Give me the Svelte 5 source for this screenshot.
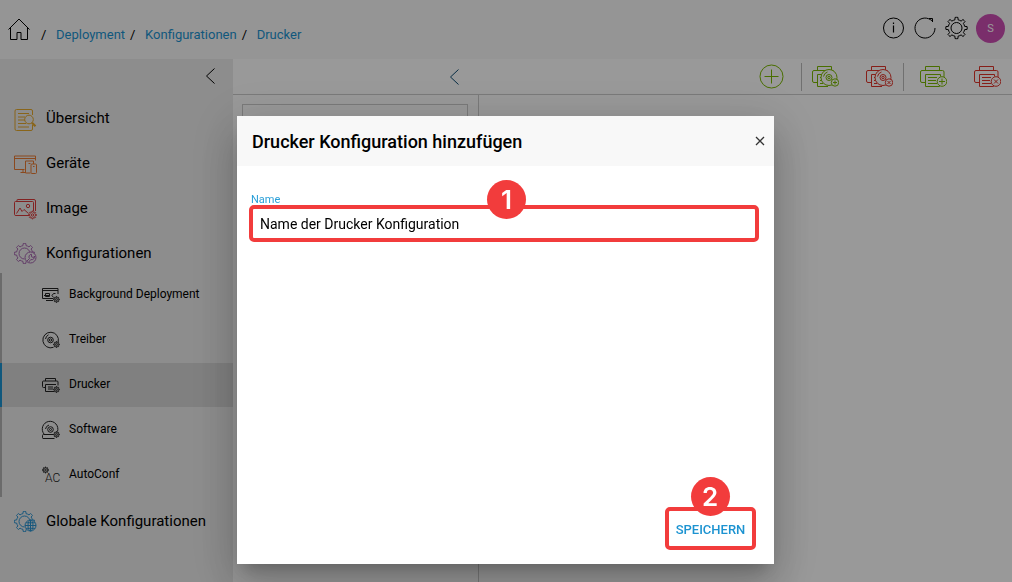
<script lang="ts">
    let name = $state('Name der Drucker Konfiguration');
    let open = $state(true);

    const crumbs = ['Deployment', 'Konfigurationen', 'Drucker'];

    const menu = [
        { label: 'Übersicht', icon: 'overview', color: '#e5a82c' },
        { label: 'Geräte', icon: 'devices', color: '#e87b32' },
        { label: 'Image', icon: 'image', color: '#d93a3a' },
        {
            label: 'Konfigurationen',
            icon: 'config',
            color: '#a565ae',
            children: [
                { label: 'Background Deployment', icon: 'background' },
                { label: 'Treiber', icon: 'disc' },
                { label: 'Drucker', icon: 'printer', active: true },
                { label: 'Software', icon: 'software' },
                { label: 'AutoConf', icon: 'autoconf' }
            ]
        },
        { label: 'Globale Konfigurationen', icon: 'global', color: '#2a93d1' }
    ];

    // outline of a cog wheel with flat teeth
    function gear(cx: number, cy: number, inner: number, outer: number, teeth = 8) {
        const step = (Math.PI * 2) / teeth;
        const at = (r: number, a: number) =>
            `${(cx + r * Math.cos(a)).toFixed(2)} ${(cy + r * Math.sin(a)).toFixed(2)}`;
        let d = '';
        for (let i = 0; i < teeth; i++) {
            const a = i * step - Math.PI / 2;
            d += `${i ? 'L' : 'M'}${at(inner, a - step * 0.25)}`;
            d += `L${at(outer, a - step * 0.17)}`;
            d += `A${outer} ${outer} 0 0 1 ${at(outer, a + step * 0.17)}`;
            d += `L${at(inner, a + step * 0.25)}`;
            d += `A${inner} ${inner} 0 0 1 ${at(inner, a + step * 0.75)}`;
        }
        return d + 'Z';
    }
</script>

{#snippet chevron()}
    <svg class="icon" width="24" height="24" viewBox="0 0 24 24"><path d="M15.500 4.500 7.500 12l8 7.500" /></svg>
{/snippet}

{#snippet toolIcon(disc, add)}
    <svg class="icon" width="28" height="28" viewBox="0 0 28 28">
        <path d="M6.500 7.500V3.500h14v4" />
        {#if disc}
            <path d="M6.500 19.500H3q-1.500 0-1.500-1.500V9Q1.500 7.500 3 7.500h19.500M14 11.500H6.500v12H17M9 14.500h3m-3 3h3m-3 3h3" />
            <circle cx="18" cy="14.500" r="8" class="paper" />
            <circle cx="18" cy="14.500" r="3" />
            <circle cx="18" cy="14.500" r="1.200" />
            <path d="M12.500 13.500q.700-3.500 4-4.500" />
            <circle cx="24" cy="19.500" r="3.700" class="paper" />
            {#if add}
                <path d="M24 17.500v4M22 19.500h4" />
            {:else}
                <path d="m22.500 18 3 3m0-3-3 3" />
            {/if}
        {:else}
            <path d="M6 19.500H3Q1.500 19.500 1.500 18V9Q1.500 7.500 3 7.500h20.500Q25 7.500 25 9v5M20.500 22.500v1h-14v-12h15v2M9 14.500h9M9 17.500h8M9 20.500h9" />
            <circle cx="23" cy="18.500" r="4.800" class="paper" />
            {#if add}
                <path d="M23 15.500v6M20 18.500h6" />
            {:else}
                <path d="m21 16.500 4 4m0-4-4 4" />
            {/if}
        {/if}
    </svg>
{/snippet}

{#snippet navIcon(kind)}
    <svg class="icon" width="24" height="24" viewBox="0 0 24 24">
        {#if kind === 'overview'}
            <path d="M18.500 7V3q0-1.500-1.500-1.500H2.500Q1 1.500 1 3v18q0 1.500 1.500 1.500H17q1.500 0 1.500-1.500v-4M4 5.500h11M4 9h7M4 12h7M4 15.500h8M4 19h11" />
            <circle cx="15" cy="11.500" r="4.300" />
            <path d="m18 14.800 3.500 3.500" stroke-width="2.200" />
        {:else if kind === 'devices'}
            <path d="M10.500 16.500H.500v-13.500H21.500V7.500M.500 5.500h21M6.500 19.500h5M9 16.500v3" />
            <path d="M16.500 20h-5v-12h8V11" />
            <rect x="17" y="11" width="5.500" height="9.500" rx="1" />
            <path d="M19 13.500h1.500M14.500 10.500h2" />
        {:else if kind === 'image'}
            <path d="M15 17.500H2q-1.500 0-1.500-1v-12q0-1 1-1h17q1 0 1 1V13M3 3.500V2q0-.500.500-.500H20q1.500 0 1.500 1.500v10" />
            <path d="m2.500 15.500 3.500-5.500 2 3.500 2-2 4.500 4" />
            <circle cx="14" cy="8" r="1.700" />
            <path d={gear(18.500, 17, 2.800, 3.900)} />
            <circle cx="18.500" cy="17" r="1.200" />
        {:else if kind === 'config' || kind === 'global'}
            <path d={gear(10.500, 10.500, 8, 10)} />
            <path d="M10.500 16a5.500 5.500 0 1 1 5.500-5.500" />
            <circle cx="16.500" cy="14.500" r="5.500" class="mask" />
            {#if kind === 'config'}
                <path d="M13 18l2.500-2.500a2.600 2.600 0 0 1 2-4.200v2.500l2 .700 1-1.500a3 3 0 0 1-3.700 3.600l-2.200 2.500" />
            {:else}
                <ellipse cx="16.500" cy="14.500" rx="2.500" ry="5.500" />
                <path d="M16.500 9v11M11 14.500h11M12 11.800h9M12 17.300h9" />
            {/if}
        {/if}
    </svg>
{/snippet}

{#snippet subIcon(kind)}
    <svg class="icon" width="20" height="20" viewBox="0 0 20 20">
        {#if kind === 'background'}
            <path d="M12.500 13.500H1.500v-10h15.500V9M1.500 5.500h15.500M5 15.500h7" />
            <path d="M3 10.500h6M4.500 8.500h4v3h-4zM14.500 8.500h-2l-1.500 2 1.500 2" />
        {:else if kind === 'disc'}
            <path d="M17.200 12a7.800 7.800 0 1 0-4.700 5.300" />
            <circle cx="9.500" cy="10" r="2.800" />
            <circle cx="9.500" cy="10" r="1.200" />
            <path d="M4.500 9Q5 6 7.500 4.800" />
        {:else if kind === 'printer'}
            <path d="M4.500 6V3.500h10V6M4.500 12.500H2.500q-1 0-1-1V7q0-1 1-1h13.500q1 0 1 1v3.500M13 16.500H4.500v-7h10.500M7 12h5M7 14h5" />
        {:else if kind === 'software'}
            <path d="M3 14a7.800 7.800 0 1 1 13.500-2.500M13.500 18.500H2q-.500 0-.500-1V15.500q0-1 1-1h10" />
            <circle cx="9.500" cy="9.500" r="2.800" />
            <circle cx="9.500" cy="9.500" r="1" />
            <path d="M4.500 9q.500-3 3.500-4" />
        {:else}
            <path d={gear(4.500, 5, 2, 3)} />
            <circle cx="4.500" cy="5" r=".8" />
            <text x="4" y="17">AC</text>
        {/if}
        {#if kind !== 'autoconf'}
            <path d={gear(15.500, 14.500, 2, 3)} />
            <circle cx="15.500" cy="14.500" r=".9" />
        {/if}
    </svg>
{/snippet}

<div class="app">
    <header>
        <nav class="crumbs" aria-label="Pfad">
            <a class="home" href="#home" aria-label="Start">
                <svg class="icon" width="24" height="24" viewBox="0 0 24 24"><path d="M1.500 11.500 12 1 22.500 11.500M3.500 9.500v12h6.500v-7h4v7h6.500v-12" /></svg>
            </a>
            {#each crumbs as crumb}
                <span>/</span>
                <a href="#{crumb}">{crumb}</a>
            {/each}
        </nav>
        <div class="actions">
            <button aria-label="Info">
                <svg class="icon" width="24" height="24" viewBox="0 0 24 24"><circle cx="13.500" cy="12" r="10" /><path d="M13.500 9.500v7M13.500 6.500v1.500" stroke-width="1.200" /></svg>
            </button>
            <button aria-label="Aktualisieren">
                <svg class="icon" width="24" height="24" viewBox="0 0 24 24"><path d="M23 12A10 10 0 1 1 18.500 3.700l1.500 1M17 2.500h3.500V6" /></svg>
            </button>
            <button aria-label="Einstellungen">
                <svg class="icon" width="24" height="24" viewBox="0 0 24 24"><path d={gear(12.500, 12, 8.300, 10.700)} /><circle cx="12.500" cy="12" r="5.500" /></svg>
            </button>
            <button class="avatar">S</button>
        </div>
    </header>

    <div class="columns">
        <aside>
            <div class="collapse">
                <button aria-label="Menü einklappen">{@render chevron()}</button>
            </div>
            <ul class="menu">
                {#each menu as item}
                    <li>
                        <a class="item" href="#{item.icon}">
                            <span class="glyph" style="color: {item.color}">{@render navIcon(item.icon)}</span>
                            {item.label}
                        </a>
                        {#if item.children}
                            <ul class="submenu">
                                {#each item.children as child}
                                    <li>
                                        <a class="subitem" class:active={child.active} href="#{child.icon}">
                                            {@render subIcon(child.icon)}
                                            <span>{child.label}</span>
                                        </a>
                                    </li>
                                {/each}
                            </ul>
                        {/if}
                    </li>
                {/each}
            </ul>
        </aside>

        <section>
            <div class="toolbar">
                <div class="toolbar-left">
                    <button aria-label="Liste einklappen">{@render chevron()}</button>
                </div>
                <div class="tools">
                    <button class="add" aria-label="Hinzufügen">
                        <svg class="icon" width="28" height="28" viewBox="0 0 28 28"><circle cx="13.500" cy="13.500" r="11.500" /><path d="M13.500 6.500v14M6.500 13.500h14" /></svg>
                    </button>
                    <div class="group">
                        <button class="add" aria-label="Treiber hinzufügen">{@render toolIcon(true, true)}</button>
                        <button class="remove" aria-label="Treiber entfernen">{@render toolIcon(true, false)}</button>
                    </div>
                    <div class="group wide">
                        <button class="add" aria-label="Drucker hinzufügen">{@render toolIcon(false, true)}</button>
                        <button class="remove" aria-label="Drucker entfernen">{@render toolIcon(false, false)}</button>
                    </div>
                </div>
            </div>
            <div class="content">
                <div class="list">
                    <input type="search" aria-label="Suche" />
                </div>
            </div>
        </section>
    </div>
</div>

{#if open}
    <div class="overlay">
        <div class="dialog" role="dialog" aria-modal="true" aria-labelledby="dialog-title">
            <div class="dialog-header">
                <h1 id="dialog-title">Drucker Konfiguration hinzufügen</h1>
                <button class="close" aria-label="Schließen" onclick={() => (open = false)}>
                    <svg class="icon" width="10" height="10" viewBox="0 0 10 10"><path d="m1 1 8 8M9 1 1 9" stroke-width="1.300" /></svg>
                </button>
            </div>
            <div class="dialog-body">
                <label for="name">Name</label>
                <div class="marked">
                    <input id="name" type="text" bind:value={name} />
                    <span class="marker">1</span>
                </div>
            </div>
            <div class="dialog-footer">
                <div class="marked">
                    <button class="save">SPEICHERN</button>
                    <span class="marker">2</span>
                </div>
            </div>
        </div>
    </div>
{/if}

<style>
    :global(body) {
        margin: 0;
        font-family: Roboto, sans-serif;
        color: #000;
    }

    button {
        display: flex;
        align-items: center;
        justify-content: center;
        padding: 0;
        border: 0;
        background: none;
        color: inherit;
        font-family: inherit;
        cursor: pointer;
    }

    a {
        text-decoration: none;
    }

    ul {
        list-style: none;
        margin: 0;
        padding: 0;
    }

    .icon {
        display: block;
        flex: none;
        fill: none;
        stroke: currentColor;
        stroke-width: 1;
        stroke-linejoin: round;
    }

    .icon text {
        font-size: 12px;
        font-weight: 300;
        fill: currentColor;
        stroke: none;
    }

    .mask {
        fill: #ebebeb;
    }

    .paper {
        fill: #fff;
    }

    .app {
        display: flex;
        flex-direction: column;
        min-height: 100vh;
        background: #fff;
    }

    header {
        display: flex;
        align-items: center;
        justify-content: space-between;
        height: 59px;
        padding: 0 7px;
        box-sizing: border-box;
        background: #f8f8f8;
    }

    .crumbs {
        display: flex;
        align-items: center;
        font-size: 13px;
        line-height: 24px;
        padding-top: 10px;
    }

    .crumbs a {
        color: #1c93d1;
    }

    .crumbs span {
        width: 6px;
        margin: 0 9px 0 5px;
    }

    .crumbs .home {
        color: #000;
        margin: 0 5px 10px 0;
    }

    .actions {
        display: flex;
        align-items: center;
        gap: 8px;
        padding-bottom: 2px;
    }

    .actions .icon {
        margin-bottom: 1px;
    }

    .avatar {
        width: 29px;
        height: 29px;
        border-radius: 50%;
        background: #cc4db3;
        color: #fff;
        font-size: 11px;
    }

    .columns {
        display: flex;
        flex: 1;
    }

    aside {
        width: 233px;
        flex: none;
        background: #ebebeb;
    }

    .collapse {
        display: flex;
        justify-content: flex-end;
        padding: 5px 10px;
    }

    .item {
        display: flex;
        align-items: center;
        height: 45px;
        padding: 5px 0 0 14px;
        box-sizing: border-box;
        color: #000;
        font-size: 15px;
    }

    .glyph {
        margin-right: 8px;
        padding-top: 4px;
    }

    .submenu {
        display: flex;
        flex-direction: column;
        gap: 1px;
        margin-bottom: -1px;
        background: linear-gradient(#b3b3b3, #b3b3b3) left / 2px 100% no-repeat;
    }

    .subitem {
        display: flex;
        align-items: center;
        gap: 8px;
        height: 44px;
        padding-left: 39px;
        border-left: 2px solid transparent;
        color: #000;
        font-size: 12px;
    }

    .subitem span {
        padding-bottom: 2px;
    }

    .subitem .icon {
        color: #222;
    }

    .subitem.active {
        border-left-color: #1c93d1;
        background: #d5d5d5;
    }

    section {
        display: flex;
        flex-direction: column;
        flex: 1;
        min-width: 0;
    }

    .toolbar {
        display: flex;
        justify-content: space-between;
        height: 36px;
        box-sizing: border-box;
        border-bottom: 1px solid #ccc;
    }

    .toolbar-left {
        display: flex;
        align-items: center;
        justify-content: flex-end;
        width: 234px;
        color: #0d4c73;
    }

    .tools {
        display: flex;
        align-items: center;
        padding-right: 11px;
    }

    .tools > .add {
        margin-right: 15px;
    }

    .group {
        display: flex;
        gap: 26px;
        padding: 0 10px 0 9px;
        border-left: 1px solid #bbb;
    }

    .group.wide {
        padding: 0 0 0 15px;
    }

    .add {
        color: #7ab800;
    }

    .remove {
        color: #e0352b;
    }

    .content {
        display: flex;
        flex: 1;
    }

    .list {
        width: 246px;
        padding: 9px 10px 0 9px;
        box-sizing: border-box;
        border-right: 1px solid #ccc;
    }

    .list input {
        display: block;
        width: 100%;
        height: 30px;
        box-sizing: border-box;
        border: 1px solid #ccc;
        background: transparent;
    }

    .overlay {
        position: fixed;
        inset: 0;
        display: flex;
        align-items: flex-start;
        justify-content: center;
        padding: 116px 1px 0 0;
        background: rgba(0, 0, 0, 0.4);
    }

    .dialog {
        display: flex;
        flex-direction: column;
        width: 537px;
        max-width: 100%;
        min-height: 448px;
        background: #fff;
        box-shadow: 0 11px 15px -7px rgba(0, 0, 0, 0.2), 0 24px 38px 3px rgba(0, 0, 0, 0.14),
            0 9px 46px 8px rgba(0, 0, 0, 0.12);
    }

    .dialog-header {
        display: flex;
        align-items: center;
        justify-content: space-between;
        height: 50px;
        padding: 0 9px 0 15px;
        background: #f8f8f8;
    }

    h1 {
        margin: 0;
        font-size: 18px;
        font-weight: 500;
    }

    .close {
        color: #333;
    }

    .dialog-body {
        flex: 1;
        padding: 29px 15px 0 12px;
    }

    label {
        display: block;
        padding-left: 2px;
        color: #2a9fd8;
        font-size: 11px;
        line-height: 10px;
    }

    .marked {
        position: relative;
    }

    .dialog-body input,
    .save {
        box-sizing: border-box;
        border: 4px solid #f23c3c;
        border-radius: 5px;
    }

    .dialog-body input {
        display: block;
        width: 100%;
        height: 37px;
        padding: 0 7px;
        background: #fff;
        color: #000;
        font-family: inherit;
        font-size: 14px;
        outline: 0;
    }

    .dialog-footer {
        display: flex;
        justify-content: flex-end;
        padding: 0 18px 14px;
    }

    .save {
        width: 91px;
        height: 43px;
        padding-top: 2px;
        color: #1c93d1;
        font-size: 13px;
        font-weight: 500;
    }

    .marker {
        position: absolute;
        left: 50%;
        top: -30px;
        width: 39px;
        height: 39px;
        margin-left: -20px;
        border-radius: 50%;
        background: #f23c3c;
        color: #fff;
        font-family: Inter, sans-serif;
        font-size: 26px;
        font-weight: 600;
        line-height: 39px;
        text-align: center;
    }

    .dialog-body .marker {
        top: -25px;
        margin-left: -17px;
    }
</style>
